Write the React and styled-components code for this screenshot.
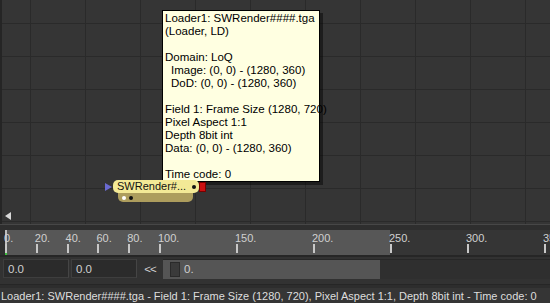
import React from 'react'
import styled, { createGlobalStyle } from 'styled-components'

const GlobalStyle = createGlobalStyle`
    html, body {
        margin: 0;
        padding: 0;
        background: #333333;
        overflow: hidden;
    }
    body {
        font-family: "Liberation Sans", Arial, sans-serif;
    }
`

const Page = styled.div`
    width: 550px;
    height: 303px;
    display: flex;
    flex-direction: column;
    background: #333333;
    font-size: 11.5px;
    color: #dcdcdc;
`

const FlowView = styled.div`
    position: relative;
    height: 224px;
    flex: none;
    background-color: #353535;
    background-image:
        linear-gradient(to right, #2a2a2a 1px, transparent 1px),
        linear-gradient(to bottom, #2a2a2a 1px, transparent 1px);
    background-size: 55px 33px;
    background-position: 28px 23px;
    border-left: 2px solid #252525;
    box-sizing: border-box;
    display: flex;
    flex-direction: column;
    justify-content: flex-end;
`

const ScrollRow = styled.div`
    height: 14px;
    display: flex;
    align-items: center;
    padding-left: 3px;
    padding-bottom: 1px;
`

const ScrollArrow = styled.div`
    width: 0;
    height: 0;
    border-top: 4px solid transparent;
    border-bottom: 4px solid transparent;
    border-right: 6px solid #d8d8d8;
`

const Node = styled.div`
    position: absolute;
    left: 103px;
    top: 180px;
    display: flex;
    flex-direction: column;
`

const NodeTop = styled.div`
    display: flex;
    align-items: center;
`

const InputArrow = styled.div`
    width: 0;
    height: 0;
    border-top: 4px solid transparent;
    border-bottom: 4px solid transparent;
    border-left: 7px solid #6a6ad0;
    margin-right: 1px;
`

const NodeBody = styled.div`
    width: 86px;
    height: 13px;
    box-sizing: border-box;
    background: #f3e996;
    border-radius: 5px;
    display: flex;
    align-items: center;
    justify-content: space-between;
    padding: 0 3px 0 4px;
    color: #111;
    font-size: 11px;
    line-height: 13px;
    white-space: nowrap;
`

const Dot = styled.span`
    width: 4px;
    height: 4px;
    border-radius: 50%;
    background: ${p => p.light ? '#ffffff' : '#111111'};
    flex: none;
`

const OutputSquare = styled.div`
    width: 7px;
    height: 10px;
    background: #cc1010;
    border: 1px solid #700;
    box-sizing: border-box;
`

const NodeStrip = styled.div`
    margin-left: 13px;
    width: 75px;
    height: 9px;
    box-sizing: border-box;
    background: #ad9d5d;
    border-radius: 0 0 5px 5px;
    display: flex;
    align-items: center;
    padding-left: 4px;
    gap: 3px;
`

const Tooltip = styled.div`
    position: absolute;
    left: 160px;
    top: 10px;
    width: 158px;
    box-sizing: border-box;
    background: #ffffe1;
    border: 1px solid #000;
    box-shadow: 3px 3px 0 rgba(0, 0, 0, 0.45);
    padding: 1px 2px 0 2px;
    color: #000;
    font-size: 11.5px;
    line-height: 13px;
    white-space: pre;
`

const Line = styled.div`
    height: 13px;
    padding-left: ${p => p.indent ? '6px' : '0'};
`

const Separator = styled.div`
    height: 5px;
    flex: none;
    border-top: 1px solid #474747;
    background: #2e2e2e;
`

const Ruler = styled.div`
    position: relative;
    height: 25px;
    flex: none;
    background: linear-gradient(to right, #2f2f2f 5px, #575757 5px, #575757 390px, #353535 390px);
    overflow: hidden;
`

const Tick = styled.div`
    position: absolute;
    top: 0;
    display: flex;
    flex-direction: column;
    align-items: flex-start;
`

const TickLabel = styled.span`
    font-size: 11px;
    line-height: 12px;
    color: #d0d0d0;
    margin-top: 2px;
    margin-left: -1px;
`

const TickMark = styled.span`
    width: 2px;
    height: 9px;
    background: #c8c8c8;
`

const Playhead = styled.div`
    position: absolute;
    left: 5px;
    top: 0;
    bottom: 0;
    width: 2px;
    background: #bdbdbd;
`

const GreenPixel = styled.div`
    position: absolute;
    left: 5px;
    bottom: 0;
    width: 2px;
    height: 2px;
    background: #3cc03c;
`

const Controls = styled.div`
    height: 30px;
    box-sizing: border-box;
    flex: none;
    display: flex;
    align-items: center;
    gap: 2px;
    padding: 0 0 4px 3px;
    background: #323232;
    border-top: 2px solid #262626;
    border-bottom: 1px solid #262626;
`

const NumberBox = styled.div`
    width: 66px;
    height: 19px;
    box-sizing: border-box;
    background: #2b2b2b;
    border: 1px solid #3e3e3e;
    border-right-color: #454545;
    display: flex;
    align-items: center;
    padding-left: 4px;
    color: #d0d0d0;
`

const Rewind = styled.span`
    width: 22px;
    text-align: center;
    color: #d0d0d0;
    letter-spacing: -1px;
`

const Slider = styled.div`
    flex: 1;
    height: 19px;
    display: flex;
    background: #2f2f2f;
    border-top: 1px solid #272727;
`

const SliderFill = styled.div`
    width: 210px;
    display: flex;
    align-items: center;
    background: #555555;
    padding-left: 7px;
    gap: 4px;
    color: #d0d0d0;
`

const SliderKnob = styled.div`
    width: 10px;
    height: 15px;
    box-sizing: border-box;
    background: #3a3a3a;
    border: 1px solid #2a2a2a;
`

const StatusBar = styled.div`
    flex: 1;
    display: flex;
    align-items: center;
    padding-left: 1px;
    background: #353535;
    border-top: 3px solid #2d2d2d;
    color: #dedede;
    font-size: 11px;
    white-space: nowrap;
    overflow: hidden;
`

const tooltipLines = [
    { text: 'Loader1: SWRender####.tga' },
    { text: '(Loader, LD)' },
    { text: '' },
    { text: 'Domain: LoQ' },
    { text: 'Image: (0, 0) - (1280, 360)', indent: true },
    { text: 'DoD: (0, 0) - (1280, 360)', indent: true },
    { text: '' },
    { text: 'Field 1: Frame Size (1280, 720)' },
    { text: 'Pixel Aspect 1:1' },
    { text: 'Depth 8bit int' },
    { text: 'Data: (0, 0) - (1280, 360)' },
    { text: '' },
    { text: 'Time code: 0' },
]

const ticks = [0, 20, 40, 60, 80, 100, 150, 200, 250, 300, 350]

export default function App() {
    return (
        <>
            <GlobalStyle />
            <Page>
                <FlowView>
                    <Tooltip>
                        {tooltipLines.map((l, i) => (
                            <Line key={i} indent={l.indent}>{l.text}</Line>
                        ))}
                    </Tooltip>
                    <Node>
                        <NodeTop>
                            <InputArrow />
                            <NodeBody>
                                <span>SWRender#...</span>
                                <Dot />
                            </NodeBody>
                            <OutputSquare />
                        </NodeTop>
                        <NodeStrip>
                            <Dot light />
                            <Dot />
                        </NodeStrip>
                    </Node>
                    <ScrollRow>
                        <ScrollArrow />
                    </ScrollRow>
                </FlowView>
                <Separator />
                <Ruler>
                    <Playhead />
                    {ticks.map(t => (
                        <Tick key={t} style={{ left: 5 + t * 1.54 }}>
                            <TickLabel>{t}.</TickLabel>
                            <TickMark />
                        </Tick>
                    ))}
                    <GreenPixel />
                </Ruler>
                <Controls>
                    <NumberBox>0.0</NumberBox>
                    <NumberBox>0.0</NumberBox>
                    <Rewind>&lt;&lt;</Rewind>
                    <Slider>
                        <SliderFill>
                            <SliderKnob />
                            <span>0.</span>
                        </SliderFill>
                    </Slider>
                </Controls>
                <StatusBar>
                    Loader1: SWRender####.tga - Field 1: Frame Size (1280, 720), Pixel Aspect 1:1, Depth 8bit int - Time code: 0
                </StatusBar>
            </Page>
        </>
    )
}
